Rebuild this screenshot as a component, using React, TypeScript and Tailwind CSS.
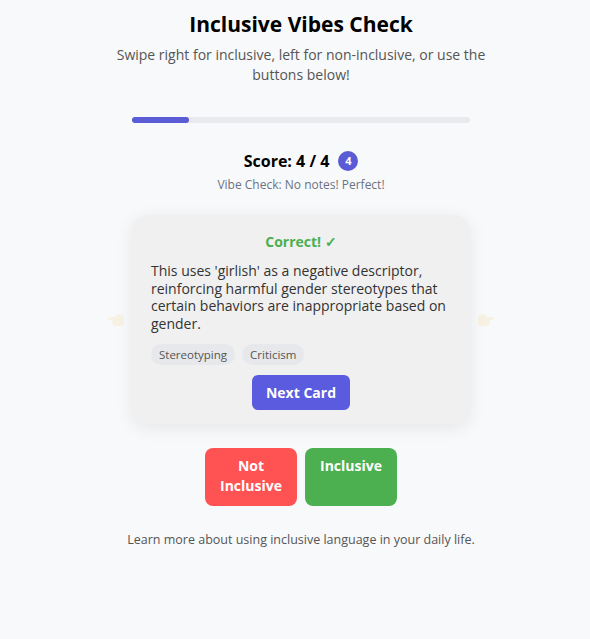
import React from "react";

const Hand = ({ flip }: { flip?: boolean }) => (
  <svg
    width="18"
    height="14"
    viewBox="0 0 18 14"
    className={flip ? "-scale-x-100" : ""}
    aria-hidden
  >
    <path
      d="M1 5.5 Q1 4 2.5 4 L9 4 Q8 1 10.5 1 L15 2 Q17 3 17 6 L17 10 Q17 13 14 13 L8 13 Q6 13 6 11 Q4.5 11 4.5 9.5 Q4.5 8 6 7 L2.5 7 Q1 7 1 5.5 Z"
      fill="#f5d58a"
    />
  </svg>
);

const App = () => {
  return (
    <div className="min-h-screen bg-[#f8f9fa] pl-3 font-['Open_Sans',sans-serif] text-[#222]">
      <div className="mx-auto flex max-w-[400px] flex-col items-center pt-[10px]">
        {/* Header */}
        <h1 className="text-[21px] font-bold leading-7 text-black">
          Inclusive Vibes Check
        </h1>
        <p className="mt-[7px] text-center text-sm leading-5 text-[#555]">
          Swipe right for inclusive, left for non-inclusive, or use the buttons
          below!
        </p>

        {/* Progress */}
        <div className="mt-[32px] h-[6px] w-[338px] rounded-full bg-[#e9eaed]">
          <div className="h-full w-[17%] rounded-full bg-[#5b5bd6]" />
        </div>

        {/* Score */}
        <div className="mt-[26px] flex items-center gap-[9px]">
          <span className="text-base font-bold leading-6 text-black">
            Score: 4 / 4
          </span>
          <span className="flex h-5 w-5 items-center justify-center rounded-full bg-[#5b5bd6] text-[11px] font-bold text-white">
            4
          </span>
        </div>
        <p className="mt-1 text-xs leading-4 text-[#6b7280]">
          Vibe Check: No notes! Perfect!
        </p>

        {/* Card */}
        <div className="relative mt-[22px] w-[338px]">
          <div className="absolute -left-[25px] top-[98px] opacity-20">
            <Hand />
          </div>
          <div className="absolute -right-[25px] top-[98px] opacity-20">
            <Hand flip />
          </div>
          <div className="flex flex-col rounded-2xl bg-[#f0f0f0] px-[19px] pb-[14px] pt-[17px] shadow-[0_4px_18px_rgba(0,0,0,0.08)]">
            <p className="text-center text-sm font-bold leading-5 text-[#4caf50]">
              Correct! ✓
            </p>
            <p className="mt-[10px] text-sm leading-[17.5px] text-[#333]">
              This uses 'girlish' as a negative descriptor, reinforcing harmful
              gender stereotypes that certain behaviors are inappropriate based
              on gender.
            </p>
            <div className="mt-[12px] flex gap-[7px]">
              <span className="rounded-full bg-[#e6e8eb] px-2 py-[3px] text-[11.5px] leading-[15px] text-[#555]">
                Stereotyping
              </span>
              <span className="rounded-full bg-[#e6e8eb] px-2 py-[3px] text-[11.5px] leading-[15px] text-[#555]">
                Criticism
              </span>
            </div>
            <button className="mx-auto mt-[10px] h-[35px] w-[98px] rounded-md bg-[#5b5bdf] text-sm font-bold text-white">
              Next Card
            </button>
          </div>
        </div>

        {/* Buttons */}
        <div className="mt-6 flex gap-2">
          <button className="w-[92px] self-stretch rounded-lg bg-[#ff5252] pb-[10px] pt-2 text-sm font-bold leading-5 text-white">
            Not
            <br />
            Inclusive
          </button>
          <button className="flex w-[92px] flex-col rounded-lg bg-[#4caf50] pb-[10px] pt-2 text-sm font-bold leading-5 text-white">
            <span className="w-full text-center">Inclusive</span>
          </button>
        </div>

        {/* Footer */}
        <p className="mt-[26px] text-[12.5px] leading-4 text-[#555]">
          Learn more about using inclusive language in your daily life.
        </p>
      </div>
    </div>
  );
};

export default App;
